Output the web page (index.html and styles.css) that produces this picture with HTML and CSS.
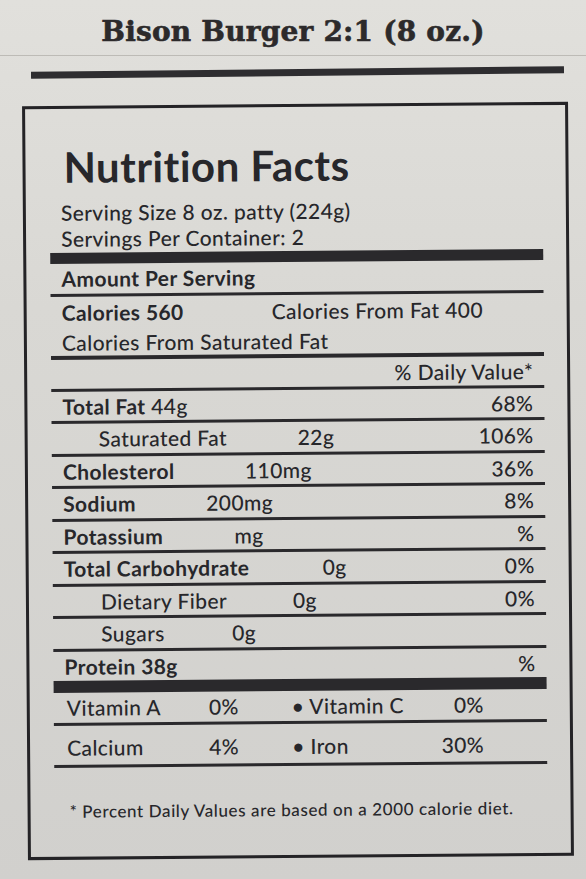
FILE: index.html
```html
<!DOCTYPE html>
<html lang="en">
<head>
  <meta charset="UTF-8" />
  <meta name="viewport" content="width=device-width, initial-scale=1.0" />
  <title>Bison Burger 2:1 - Nutrition Facts</title>
  <link rel="stylesheet" href="styles.css">
</head>
<body>
  <header class="page-head">
    <h1 class="product-name">Bison Burger 2:1 (8 oz.)</h1>
  </header>
  <div class="head-rule"></div>

  <section class="label">
    <div class="label-inner">
      <h2 class="nf-title">Nutrition Facts</h2>
      <p class="serving">Serving Size 8 oz. patty (224g)</p>
      <p class="serving">Servings Per Container: 2</p>

      <div class="bar"></div>
      <div class="line bold">Amount Per Serving</div>
      <div class="rule"></div>

      <div class="calories">
        <div class="cal-main"><b class="cal-name">Calories 560</b><span>Calories From Fat 400</span></div>
        <div class="cal-sat">Calories From Saturated Fat</div>
      </div>
      <div class="rule rule--4"></div>

      <div class="line dv-head">% Daily Value*</div>
      <div class="rule"></div>

      <ul class="nutrients">
        <li class="row"><span class="name"><b>Total Fat</b> 44g</span><span class="dv">68%</span></li>
        <li class="row row--satfat"><span class="name">Saturated Fat</span><span class="amt">22g</span><span class="dv">106%</span></li>
        <li class="row row--chol"><b class="name">Cholesterol</b><span class="amt">110mg</span><span class="dv">36%</span></li>
        <li class="row row--sodium"><b class="name">Sodium</b><span class="amt">200mg</span><span class="dv">8%</span></li>
        <li class="row row--potassium"><b class="name">Potassium</b><span class="amt">mg</span><span class="dv">%</span></li>
        <li class="row row--carb"><b class="name">Total Carbohydrate</b><span class="amt">0g</span><span class="dv">0%</span></li>
        <li class="row row--fiber"><span class="name">Dietary Fiber</span><span class="amt">0g</span><span class="dv">0%</span></li>
        <li class="row row--sugars"><span class="name">Sugars</span><span class="amt">0g</span></li>
        <li class="row row--last"><b class="name">Protein 38g</b><span class="dv">%</span></li>
      </ul>

      <div class="bar bar--low"></div>

      <div class="vitamins">
        <div class="vit-row">
          <span>Vitamin A</span><span class="vit-val">0%</span>
          <span class="vit-name">• Vitamin C</span><span class="vit-val">0%</span>
        </div>
        <div class="vit-row vit-row--tall">
          <span>Calcium</span><span class="vit-val">4%</span>
          <span class="vit-name">• Iron</span><span class="vit-val">30%</span>
        </div>
      </div>

      <p class="footnote">* Percent Daily Values are based on a 2000 calorie diet.</p>
    </div>
  </section>
</body>
</html>
```

FILE: styles.css
```css
body {
  margin: 0;
  width: 586px;
  height: 879px;
  overflow: hidden;
  font-family: Lato, "Open Sans", sans-serif;
  font-weight: 500;
  color: #27272b;
  background: linear-gradient(#e1e0dc 0, #d9d8d4 35%, #d1d0cd 100%);
}

.page-head {
  height: 55px;
  border-bottom: 1px solid #bdbbb6;
}

.product-name {
  margin: 0;
  padding-top: 15px;
  text-align: center;
  font-family: "DejaVu Serif", serif;
  font-size: 28px;
  line-height: 34px;
  font-weight: bold;
  letter-spacing: 0.2px;
  color: #2c2a2b;
  -webkit-text-stroke: 0.6px #2c2a2b;
}

.head-rule {
  height: 7px;
  margin: 13px 22px 0 31px;
  background: #2e2d30;
  transform: rotate(-0.6deg);
}

.label {
  margin: 28px 15px 0 25px;
  border: 3px solid #242326;
  transform: rotate(-0.45deg);
}

.label-inner {
  padding: 36px 23px 33px 24px;
}

.nf-title {
  margin: 0;
  padding-left: 14px;
  font-size: 42px;
  line-height: 44px;
  font-weight: bold;
  letter-spacing: 0.5px;
}

.serving {
  margin: 0;
  padding-left: 11px;
  font-size: 21px;
  line-height: 26px;
  letter-spacing: 0.4px;
}

.nf-title + .serving {
  margin-top: 11px;
}

.bar {
  height: 11px;
  margin-top: 1px;
  background: #2a292c;
}

.bar--low {
  height: 12px;
  margin-top: 0;
}

.rule {
  height: 3px;
  background: #2a292c;
}

.rule--4 {
  height: 4px;
}

.line {
  padding: 0 11px;
  font-size: 21px;
  line-height: 30px;
  letter-spacing: 0.4px;
}

.bold {
  font-weight: bold;
}

.calories {
  padding: 0 11px;
  font-size: 21px;
  letter-spacing: 0.4px;
}

.cal-main {
  display: flex;
  line-height: 32.5px;
}

.cal-name {
  width: 210px;
}

.cal-sat {
  line-height: 26px;
}

.dv-head {
  line-height: 29px;
  text-align: right;
}

.nutrients {
  margin: 0;
  padding: 0;
  list-style: none;
  font-size: 21px;
  letter-spacing: 0.4px;
}

.row {
  display: flex;
  padding: 1px 11px 0;
  line-height: 28.5px;
  border-bottom: 3px solid #2a292c;
}

.row--last {
  border-bottom: 0;
}

.row .name {
  box-sizing: border-box;
  flex: none;
}

.row .dv {
  margin-left: auto;
}

.row--satfat .name { width: 235px; padding-left: 36px; }
.row--chol .name { width: 182px; }
.row--sodium .name { width: 143px; }
.row--potassium .name { width: 171px; }
.row--carb .name { width: 259px; }
.row--fiber .name { width: 229px; padding-left: 37px; }
.row--sugars .name { width: 168px; padding-left: 37px; }

.vitamins {
  font-size: 21px;
  letter-spacing: 0.4px;
}

.vit-row {
  display: grid;
  grid-template-columns: 130px 42px 193px 52px;
  padding: 0 13px;
  line-height: 30px;
  border-bottom: 3px solid #2a292c;
}

.vit-row--tall {
  padding-top: 7px;
  padding-bottom: 2px;
}

.vit-val {
  text-align: right;
}

.vit-name {
  padding-left: 53px;
}

.footnote {
  margin: 32px 0 0;
  padding-left: 15px;
  font-size: 17px;
  line-height: 24px;
  letter-spacing: 0.6px;
}
```
